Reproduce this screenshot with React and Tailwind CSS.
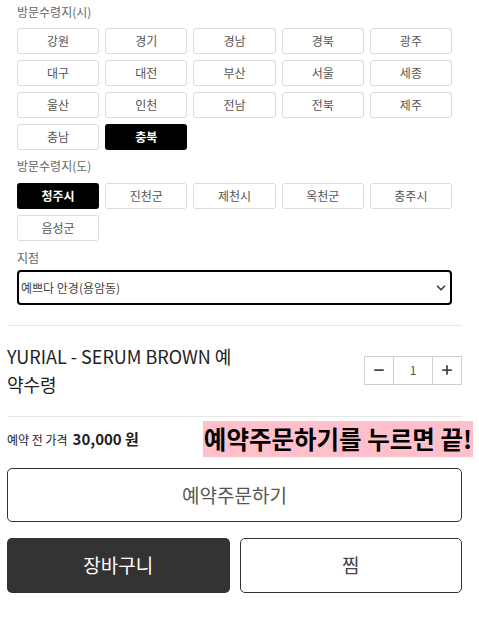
import { ChevronDown, Minus, Plus } from "lucide-react";

const cities = ["강원", "경기", "경남", "경북", "광주", "대구", "대전", "부산", "서울", "세종", "울산", "인천", "전남", "전북", "제주", "충남", "충북"];
const towns = ["청주시", "진천군", "제천시", "옥천군", "충주시", "음성군"];

function OptionGrid({ items, active }) {
  return (
    <div className="grid grid-cols-5 gap-x-[6px] gap-y-[6px]">
      {items.map((name) => (
        <button
          key={name}
          className={
            name === active
              ? "h-[26px] rounded-[3px] bg-black text-white text-[12px] font-bold"
              : "h-[26px] rounded-[3px] border border-[#dcdcdc] bg-white text-[#555] text-[12px]"
          }
        >
          {name}
        </button>
      ))}
    </div>
  );
}

export default function App() {
  return (
    <div
      className="w-[455px] ml-[7px] bg-white"
      style={{ fontFamily: '"Noto Sans CJK KR", "Noto Sans", sans-serif' }}
    >
      {/* 옵션 */}
      <div className="px-[10px] pt-[2px]">
        <div className="text-[12px] leading-[20px] text-[#666] mb-[6px]">방문수령지(시)</div>
        <OptionGrid items={cities} active="충북" />

        <div className="text-[12px] leading-[20px] text-[#666] mt-[6px] mb-[7px]">방문수령지(도)</div>
        <OptionGrid items={towns} active="청주시" />

        <div className="text-[12px] leading-[20px] text-[#666] mt-[7px] mb-[2px]">지점</div>
        <div className="h-[35px] border-2 border-black rounded-[4px] flex items-center justify-between pl-[2px] pr-[2px]">
          <span className="text-[12px] text-[#444]">예쁘다 안경(용암동)</span>
          <ChevronDown size={14} strokeWidth={3} className="text-[#444]" />
        </div>
      </div>

      <div className="mt-[20px] border-t border-[#e8e8e8]" />

      {/* 상품 */}
      <div className="flex items-center justify-between pt-[16px] pb-[18px]">
        <div className="text-[18px] leading-[28px] text-[#222] w-[240px]">
          YURIAL - SERUM BROWN 예
          <br />
          약수령
        </div>
        <div className="flex h-[29px] border border-[#cfcfcf]">
          <button className="w-[29px] flex items-center justify-center border-r border-[#cfcfcf] text-[#444]">
            <Minus size={14} strokeWidth={3} />
          </button>
          <div className="w-[38px] flex items-center justify-center text-[12px] text-[#555]">1</div>
          <button className="w-[29px] flex items-center justify-center border-l border-[#cfcfcf] text-[#444]">
            <Plus size={14} strokeWidth={3} />
          </button>
        </div>
      </div>

      <div className="border-t border-[#e8e8e8]" />

      {/* 가격 */}
      <div className="flex items-center pt-[4px]">
        <div className="flex items-baseline gap-[5px] text-[#222]">
          <span className="text-[12px]">예약 전 가격</span>
          <span className="text-[15px] font-bold">30,000 원</span>
        </div>
        <div className="ml-auto -mr-[11px] h-[36px] px-[1px] bg-[#ffc0cb] flex items-center text-[24.5px] font-bold text-black whitespace-nowrap">
          예약주문하기를 누르면 끝!
        </div>
      </div>

      {/* 버튼 */}
      <button className="mt-[11px] w-full h-[54px] border border-[#333] rounded-[5px] text-[19px] text-[#555] bg-white">
        예약주문하기
      </button>
      <div className="mt-[16px] grid grid-cols-2 gap-[10px]">
        <button className="h-[55px] rounded-[5px] bg-[#333] text-white text-[19px]">장바구니</button>
        <button className="h-[55px] rounded-[5px] border border-[#333] bg-white text-[#444] text-[19px]">찜</button>
      </div>
    </div>
  );
}
